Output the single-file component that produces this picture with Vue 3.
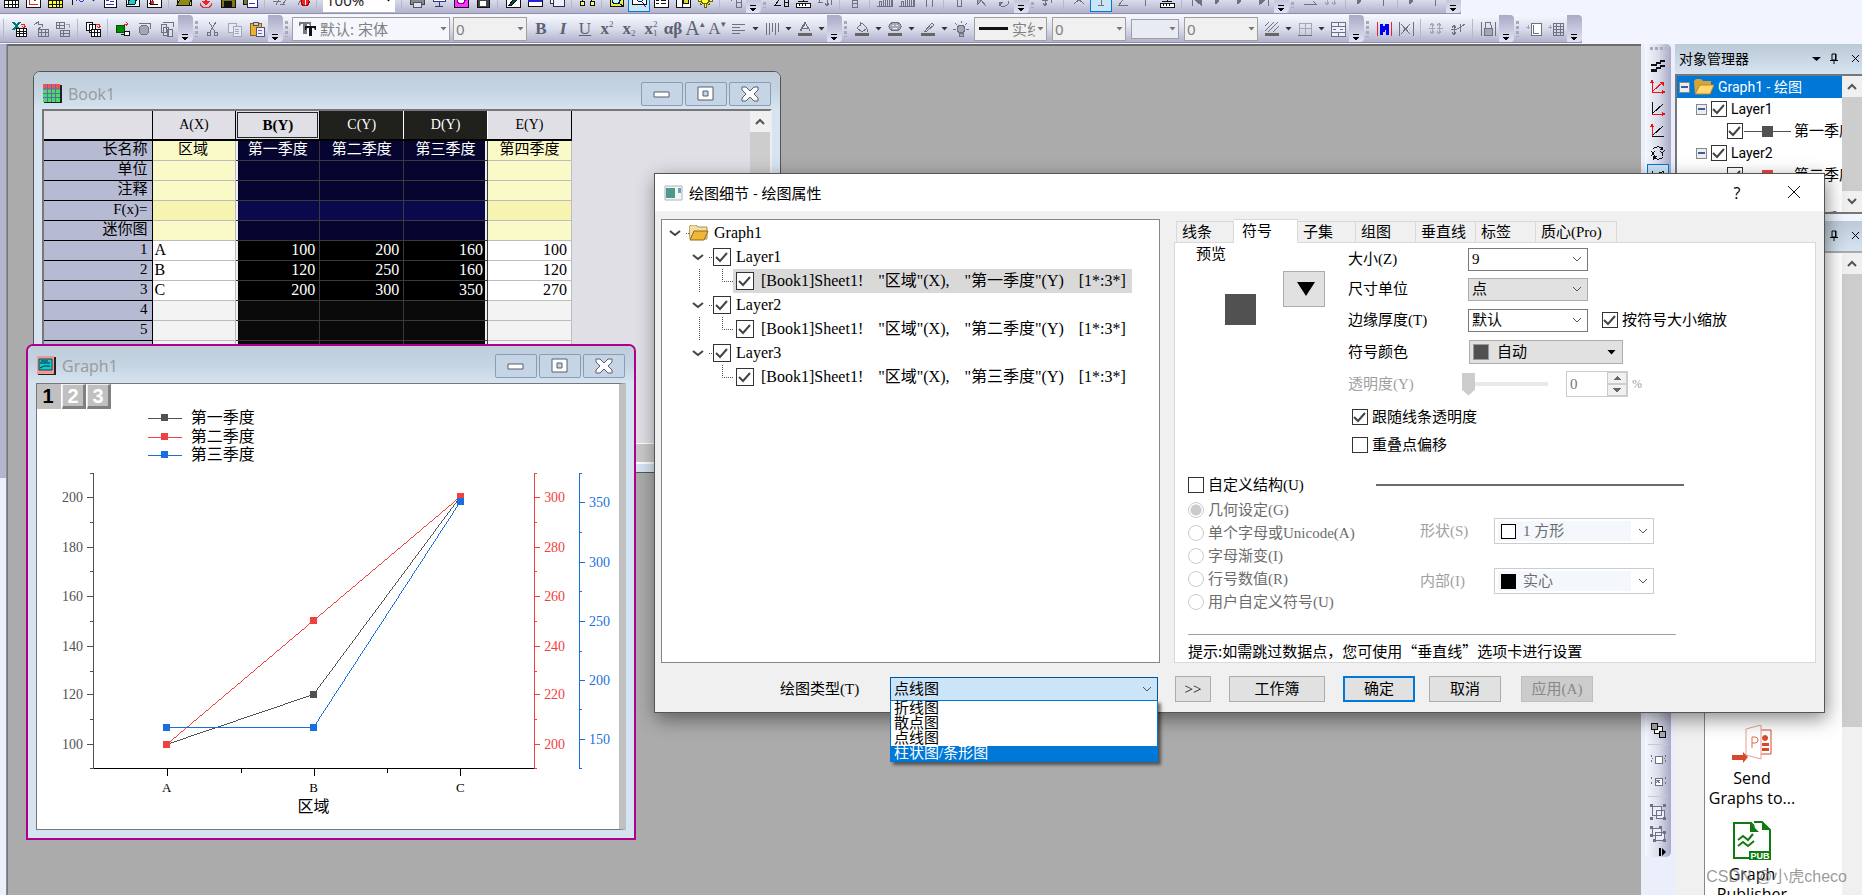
<script setup>
import { ref } from 'vue';

const K = '#111';
const G = '#6d7182';
const L = '#a3a6b4';
const N = 'none';

// each icon is a list of [path, fill, stroke] on a 16x16 grid
const icons = {
  sheet: [['M1 1h14v14H1z', '#fff', K], ['M1 5h14M1 8.500h14M1 12h14M5 1v14M9 1v14M12 1v14', N, K]],
  sheetY: [['M1 1h14v14H1z', '#ff3', K], ['M1 5h14M1 8h14M1 12h14M5 1v14M9 1v14M12 1v14', N, K]],
  graph: [['M1 1h14v14H1z', '#fff', K], ['M4 3v9h9M4 8l3-3 3 4 3-5', N, '#d22']],
  fx: [['M7 2c-4-1-2 6-4 11M2 7h5', N, K], ['M7 9c2-6 4 5 8-1', N, '#33c']],
  layout: [['M2 0h12v15H2z', '#fff', K], ['M4 4h3v5H4z', '#33c', N], ['M8 6h4M8 9h4M4 12h8', N, '#33c']],
  note: [['M2 2h13v12H2z', '#dff', K], ['M4 12l2-7h7l-2 7z', '#2cc', K]],
  matrix: [['M1 1h14v14H1z', '#fff', K], ['M3 12l9-9M4 4v8h8', N, K], ['M9 4h3v3H9zM5 9h3v3H5z', '#e22', N]],
  open: [['M1 4h6l2 2h6v7H1z', '#e7d34c', K], ['M1 13l3-6h11l-2 6z', '#8d8a18', K]],
  import: [['M2 11a6 5 0 0 0 12 0', N, '#d33'], ['M7 1h2v8h3l-4 5-4-5h3z', '#e22', N]],
  save: [['M1 1h14v14H1z', '#7a7a10', K], ['M4 9h8v6H4z', '#111', N], ['M4 1h8v5H4z', '#ddd', N]],
  saveAs: [['M1 1h11v11H1z', '#7a7a10', K], ['M5 5h10v10H5z', '#fff', '#228'], ['M7 11h6', N, '#33c']],
  run: [['M2 5l5 3-3 5M9 4l5 4-4 5M1 9h8M8 12h5', N, G]],
  stop: [['M2 5l5 3-3 5M8 4l3 3', N, G], ['M11 6a4 4 0 1 0 .1 0z', '#e22', '#b00'], ['M11 7v6', N, '#fff']],
  print: [['M3 2h10v5H3z', '#fff', '#555'], ['M1 6h14v6H1z', '#888', '#444'], ['M4 10h8v5H4z', '#ddf', '#555']],
  screen: [['M2 1h12v8H2z', '#fff', '#338'], ['M8 9v5M4 14h8', N, '#338'], ['M4 6l3-2 2 2 3-3', N, '#e22']],
  magenta: [['M1 1h14v14H1z', '#f3f', K], ['M8 4a4 4 0 1 0 .1 0z', '#fff', '#808']],
  film: [['M2 1h12v14H2z', '#444', K], ['M5 2h6v5H5zM5 9h6v5H5z', '#fff', N]],
  draw: [['M1 1h14v14H1z', '#fff', K], ['M4 13L12 3l1 4-6 6z', '#144', K]],
  win: [['M1 4h14v10H1z', '#fff', K], ['M1 4h14v6H1z', '#22d', N]],
  wins: [['M1 3h11v8H1z', '#fff', '#333'], ['M4 7h11v7H4z', '#eef', '#333']],
  org: [['M8 3L3 9M8 3l5 6', N, K], ['M1 9h4v4H1zM11 9h4v4h-4zM6 1h4v4H6z', '#ff5', K]],
  zoom: [['M1 1h13v13H1z', '#ee3', K], ['M7 4a4 4 0 1 0 .1 0zM10 11l5 4', '#bff', '#116']],
  zoom2: [['M1 1h14v11H1z', '#fff', K], ['M3 4h4v4H3z', '#111', N], ['M9 4a3 3 0 1 0 .1 0zM11 10l4 5', '#bff', '#116']],
  list: [['M1 1h14v14H1z', '#fff', K], ['M3 5h3M8 5h5M3 8h3M8 8h5M3 11h3M8 11h5', N, K]],
  script: [['M1 1h14v14H1z', '#fff', K], ['M7 1v14', N, K], ['M8 6h5v5H8z', '#dd2', K]],
  gear: [['M7 1h2v14H7zM1 7h14v2H1zM3 4l1-1 9 9-1 1zM12 3l1 1-9 9-1-1z', '#ff3', '#66600a'], ['M8 4a4 4 0 1 0 .1 0z', '#ff3', '#66600a']],
  addCol: [['M1 6h6M4 3v6', N, G], ['M9 2h5v13H9zM9 6h5M9 10h5', N, G]],
  sigma: [['M8 3H2l4 5-4 5h6', N, K], ['M11 3h4v11h-4zM11 7h4M11 10h4', N, K]],
  stamp: [['M8 2v7M3 9h10', N, K], ['M1 11h14v4H1z', '#fff', K], ['M4 12v2M7 12v2M10 12v2', N, K]],
  sort: [['M2 3h4l-4 7h4', N, G], ['M10 3v10M8 11l2 3 2-3M14 3v10', N, G]],
  cols: [['M5 1h5v14H5zM5 5h5M5 8h5M5 11h5', N, G]],
  bars: [['M2 9h2v5H2zM6 7h2v7H6zM10 4h2v10h-2zM14 2h1v12h-1z', N, G], ['M0 14.500h16', N, G]],
  tee: [['M2 6h12M5 6v9M11 6v9M5 2v4', N, G]],
  ibar: [['M6 1h4v13H6z', N, G]],
  arrowUp: [['M4 3l9 11M4 3v10l4-4z', L, G]],
  cycle: [['M2 7a6 5 0 0 1 10-3M14 9a6 5 0 0 1-10 4', N, G], ['M12 1v5H8zM4 15v-5h4z', G, N]],
  cross: [['M3 3l10 9M13 3L3 12', N, G]],
  tbar: [['M8 1v12M5 13h6M5 1h6', N, G]],
  zbar: [['M4 2h8l-8 11h9', N, G]],
  ybar: [['M8 6v8M5 3l3 3 3-3', N, G]],
  first: [['M3 3v11M6 8l6-5v10z', G, G]],
  down: [['M3 3h9l-7 9z', G, G]],
  last: [['M13 3v11M10 8L4 3v10z', G, G]],
  arrows: [['M1 6h12l-3-3M3 12h12l-3-3', N, G]],
  excel: [['M1 1h3l6 8H7zM7 1h3L4 9H1z', '#077', N], ['M5 7h10v8H5zM5 10h10M5 12.500h10M8 7v8M12 7v8', '#fff', K], ['M10 3h3v4M11 5l2 2 2-2', N, '#e22']],
  refresh: [['M1 4l4-3v2h4v3M8 6L5 8', N, G], ['M5 8h10v7H5zM5 11h10M8 8v7M12 8v7', N, G]],
  transfer: [['M1 1h8v6H1zM1 4h8M4 1v6', N, G], ['M5 9h9v6H5zM5 12h9M8 9v6', N, G], ['M11 3h3v4', N, L]],
  pages: [['M1 1h6v8H1zM4 3h6v8H4z', '#fff', K], ['M6 8h9v7H6zM6 11h9M9 8v7M12 8v7', '#fff', K], ['M11 3h3v4M12 5l2 2 2-2', N, '#e22']],
  plug: [['M1 4h8v7H1z', '#080', '#050'], ['M9 3h4M11 1l2 2-2 2', N, '#e22'], ['M6 13h3v-3h5v4H9', '#fff', K]],
  plug2: [['M7 4a5 5 0 1 0 .1 0z', L, G], ['M2 2h11v6', N, G]],
  plug3: [['M2 3h5v8H2zM4 6h5v8H4zM8 8h5v7H8z', '#dde', G], ['M4 1h10v5', N, G]],
  cut: [['M4 1l6 10M11 1L5 11', N, G], ['M4 11a2 2 0 1 0 .1 0zM11 11a2 2 0 1 0 .1 0z', N, G]],
  copy: [['M1 2h8v9H1z', '#e7e9f3', L], ['M6 5h8v10H6z', '#e7e9f3', L], ['M8 8h4M8 10h4M8 12h4', N, L]],
  paste: [['M1 2h11v12H1z', '#e8b13c', '#8a6414'], ['M4 1h5v3H4z', '#ccd', '#555'], ['M7 6h8v9H7z', '#eef', '#557'], ['M9 9h4M9 12h4', N, '#66a']],
  align: [['M1 3h13M1 6h8M1 9h13M1 12h8', N, G]],
  valign: [['M2 2v12M5 2v12M8 2v9M11 2v12M14 2v9', N, G]],
  textColor: [['M3 10L8 1l5 9M5 7h6M4 10L9 1', N, G], ['M1 12h14v3H1z', '#666', N]],
  bucket: [['M3 7l5-5 5 5-5 4z', '#dde', G], ['M13 8v3M6 1v4', N, G], ['M1 12h14v3H1z', '#666', N]],
  palette: [['M8 1a6 4.500 0 1 0 .1 0z', L, G], ['M5 4h2M9 4h2M6 7h4', N, '#eee'], ['M1 12h14v3H1z', '#666', N]],
  pen: [['M5 10l7-8 2 2-7 6z', '#dde', G], ['M1 12h14v3H1z', '#666', N]],
  bulb: [['M8 4a4 4 0 1 0 .1 0z', L, G], ['M6 12h4v3H6zM8 0v2M2 2l2 2M14 2l-2 2M0 8h3M13 8h3', L, G]],
  hatch: [['M1 5l4-4M1 10L10 1M4 11L14 1M9 11l6-6', N, G], ['M1 12h14v3H1z', '#666', N]],
  dotted: [['M2 2h12M2 7h12M2 2v12M8 2v12M14 2v12', N, L], ['M1 14h14', N, G]],
  tableA: [['M1 1h14v14H1zM1 5h14M1 11h14M8 1v4M8 11v4', '#eef', G], ['M3 8h3M10 8h3', N, G]],
  mask: [['M1 1v14M15 1v14', N, '#e22'], ['M4 13V3h2l2 4 2-4h2v10h-2V7l-2 4-2-4v6z', '#00e', '#00e']],
  unmask: [['M1 1v14M15 1v14M3 3l9 10M12 3L3 13', N, G]],
  updown: [['M4 2v11M2 5l2-3 2 3M2 10l2 3 2-3M1 7h6M11 2v11M9 5l2-3 2 3M9 10l2 3 2-3M9 7h6', N, L]],
  updown2: [['M4 4v10M2 7l2-3 2 3M2 11l2 3 2-3M10 3v8M1 9c5 0 7-1 14-6', N, G]],
  lock: [['M1 1v14M15 1v14M5 7V4a3 3 0 0 1 6 0v3', N, G], ['M4 7h8v7H4z', L, G]],
  addL: [['M0 6h4M2 4v4', N, L], ['M5 2h10v12H5z', '#fff', G], ['M7 4v8h6', N, G]],
  addGrid: [['M0 6h4M2 4v4', N, L], ['M5 2h10v12H5zM5 5h10M5 8h10M5 11h10M8 2v12M12 2v12', N, G]],
  ladder: [['M1 7h5V5h4V3h5v2h-4v2H7v2H1zM1 12h5v-2h4V8h5v2h-4v2H7v3H1z', K, N]],
  axis3: [['M2 1v12h12M2 13L13 3', N, '#e11'], ['M0 4l2-4 2 4zM12 11l4 2-4 2zM9 3h5v5z', '#e11', N]],
  axisX: [['M2 1v12M2 13L13 3', N, K], ['M2 13h12', N, '#e11'], ['M12 11l4 2-4 2z', '#e11', N]],
  axisY: [['M2 13h12M2 13L13 3', N, K], ['M2 1v12', N, '#e11'], ['M0 4l2-4 2 4z', '#e11', N]],
  swap: [['M3 4a6 5 0 0 1 10 0M13 12a6 5 0 0 1-10 0', N, K], ['M13 1v4H9zM3 15v-4h4z', K, N], ['M1 6l4 5M5 6l-4 5M10 6l2 2 3-3M12 8v3', N, K]],
  speed: [['M2 4v10M2 8h4M8 14l6-9M7 7l7-3', N, K], ['M9 6h4v3H9z', K, K]],
  merge: [['M4 4h8v7H4z', '#fff', K], ['M1 1h6v6H1zM9 9h6v6H9z', '#aaa', K]],
  front: [['M5 4h7v7H5z', '#fff', G], ['M1 3v2M1 8v2M15 3v2M15 8v2M2 6v1M14 6v1', N, G]],
  back: [['M5 4h7v7H5z', '#fff', G], ['M6 6l4 3M10 6L6 9M1 3v2M1 8v2M15 3v2M15 8v2', N, G]],
  group: [['M2 2h9v9H2zM6 6h8v8H6z', '#eceefa', G], ['M0 0h3v3H0zM13 0h3v3h-3zM0 13h3v3H0zM13 13h3v3h-3z', G, N]],
  ungroup: [['M2 2h9v7H2zM5 6h9v8H5z', '#eceefa', G], ['M0 0h3v3H0zM9 0h3v3H9zM0 8h3v3H0zM3 13h3v3H3zM13 13h3v3h-3zM13 5h3v3h-3z', G, N]]
};

const topBars = [
  { items: ['sheet', 'graph', 'sheetY', 'fx', '^', 'layout', 'note', 'matrix', '|', 'open', 'import', 'save', 'saveAs', '|', 'run', 'stop', '|', { combo: '100%', kind: 'zoom', dark: true }, '|', 'print', 'screen', 'magenta', 'film', '|', 'draw', 'win', 'wins', '|', 'org', '|', 'zoom', '*zoom2', 'list', 'script', 'gear', '|', 'addCol'] },
  { grip: true, items: ['sigma', 'stamp', 'sort', '|', 'cols', '|', 'bars', 'bars', 'tee', '|', 'ibar', 'arrowUp', 'cycle'] },
  { grip: true, items: ['updown2', '|', 'cross', '*tbar', 'zbar', 'ybar', 'stamp', '|', 'first', 'down', 'down', 'last'] },
  { grip: true, items: ['arrows', 'updown', '|', 'down', 'ybar', '|', 'down', 'ybar'] }
];

const formatBars = [
  { items: ['|', 'excel', 'refresh', 'transfer', '|', 'pages', '|', 'plug', 'plug2', 'plug3'] },
  { grip: true, items: ['cut', 'copy', 'paste'] },
  {
    grip: true,
    items: [
      { combo: '默认: 宋体', kind: 'font' }, { combo: '0', kind: 'size' },
      { text: 'B', cls: 'bold' }, { text: 'I', cls: 'ital' }, { text: 'U', cls: 'under' },
      { text: 'x', cls: 'bold', sup: '2' }, { text: 'x', cls: 'bold', sub: '2' }, { text: 'x', cls: 'bold', sup: '2', sub: '1' },
      { text: 'αβ', cls: 'bold plain' }, { text: 'A', cls: 'big', sup: '▴' }, { text: 'A', sup: '▾' },
      'align', '^', 'valign', '^', 'textColor', '^'
    ]
  },
  {
    grip: true,
    items: ['bucket', '^', 'palette', '^', 'pen', '^', 'bulb', { combo: '实线', kind: 'line' }, { combo: '0', kind: 'size' }, { combo: '', kind: 'swatch' }, { combo: '0', kind: 'size' }, 'hatch', '^', 'dotted', '^', 'tableA']
  },
  { grip: true, items: ['mask', 'unmask', '|', 'updown', 'updown2', '|', 'lock'] },
  { grip: true, items: ['addL', 'addGrid'] }
];

const bars = [
  { cls: 'bar-top', groups: topBars },
  { cls: 'bar-format', groups: formatBars }
];

const sideTop = ['ladder', 'axis3', 'axisX', 'axisY', 'swap', '*speed'];
const sideBottom = ['merge', '|', 'front', 'back', '|', 'group', 'ungroup'];

const isIcon = (it) => typeof it === 'string' && it !== '|' && it !== '^';
const iconOf = (it) => icons[it.replace('*', '')];

const columns = ['A(X)', 'B(Y)', 'C(Y)', 'D(Y)', 'E(Y)'];
const rows = [
  { head: '长名称', kind: 'meta name', cells: ['区域', '第一季度', '第二季度', '第三季度', '第四季度'] },
  { head: '单位', kind: 'meta', cells: ['', '', '', '', ''] },
  { head: '注释', kind: 'meta', cells: ['', '', '', '', ''] },
  { head: 'F(x)=', kind: 'meta formula', cells: ['', '', '', '', ''] },
  { head: '迷你图', kind: 'meta', cells: ['', '', '', '', ''] },
  { head: '1', kind: 'data', cells: ['A', '100', '200', '160', '100'] },
  { head: '2', kind: 'data', cells: ['B', '120', '250', '160', '120'] },
  { head: '3', kind: 'data', cells: ['C', '200', '300', '350', '270'] },
  { head: '4', kind: 'empty', cells: ['', '', '', '', ''] },
  { head: '5', kind: 'empty', cells: ['', '', '', '', ''] },
  { head: '6', kind: 'empty', cells: ['', '', '', '', ''] }
];

// chart
const catX = [130, 277, 424];
const yLeft = (v) => Math.round(361 - (v - 100) * 2.48);
const yRed = (v) => Math.round(361 - (v - 200) * 2.48);
const yBlue = (v) => Math.round(356 - (v - 150) * 1.19);

const series = [
  { name: '第一季度', color: '#515151', y: yLeft, values: [100, 120, 200], legendY: 34 },
  { name: '第二季度', color: '#f14040', y: yRed, values: [200, 250, 300], legendY: 53 },
  { name: '第三季度', color: '#1a6fdf', y: yBlue, values: [160, 160, 350], legendY: 71 }
].map((s) => ({ ...s, pts: s.values.map((v, i) => [catX[i], s.y(v)]) }));

const axes = [
  { x: 56, dir: -1, color: '#515151', y: yLeft, major: [100, 120, 140, 160, 180, 200], minor: [110, 130, 150, 170, 190] },
  { x: 498, dir: 1, color: '#f14040', y: yRed, major: [200, 220, 240, 260, 280, 300], minor: [210, 230, 250, 270, 290] },
  { x: 543, dir: 1, color: '#1a6fdf', y: yBlue, major: [150, 200, 250, 300, 350], minor: [175, 225, 275, 325] }
];

// dialog
const layers = ref([
  { name: 'Layer1', on: true, plot: '第一季度', plotOn: true, color: '#515151', current: true },
  { name: 'Layer2', on: true, plot: '第二季度', plotOn: true, color: '#f14040' },
  { name: 'Layer3', on: true, plot: '第三季度', plotOn: true, color: '#1a6fdf' }
]);
const plotParts = (name) => ['[Book1]Sheet1!', '"区域"(X),', `"${name}"(Y)`, '[1*:3*]'];

const tabs = [
  { label: '线条', cls: 'w58' },
  { label: '符号', cls: 'w64' },
  { label: '子集', cls: 'w58' },
  { label: '组图', cls: 'w60' },
  { label: '垂直线', cls: 'w60' },
  { label: '标签', cls: 'w60' },
  { label: '质心(Pro)', cls: 'w80' }
];
const activeTab = ref('符号');

const structures = ['几何设定(G)', '单个字母或Unicode(A)', '字母渐变(I)', '行号数值(R)', '用户自定义符号(U)'];
const plotTypes = ['折线图', '散点图', '点线图', '柱状图/条形图'];
const plotType = ref('点线图');
const hovered = ref('柱状图/条形图');
const scaleEdge = ref(true);
const followLine = ref(true);
const overlap = ref(false);
const custom = ref(false);
</script>

<template>
  <div class="app">
    <div v-for="bar in bars" :key="bar.cls" class="bar" :class="bar.cls">
      <div v-for="(group, gi) in bar.groups" :key="gi" class="bar-group">
        <span v-if="group.grip" class="grip"></span>
        <template v-for="(it, i) in group.items" :key="i">
          <span v-if="it === '|'" class="sep"></span>
          <span v-else-if="it === '^'" class="caret"></span>
          <button v-else-if="isIcon(it)" class="tool" :class="{ active: it[0] === '*' }" type="button" :aria-label="it">
            <svg viewBox="0 0 16 16" width="16" height="16">
              <path v-for="(p, pi) in iconOf(it)" :key="pi" :d="p[0]" :fill="p[1]" :stroke="p[2]" />
            </svg>
          </button>
          <button v-else-if="it.text" class="tool glyph" :class="it.cls" type="button">
            {{ it.text }}<span class="scripts"><i>{{ it.sup }}</i><i>{{ it.sub }}</i></span>
          </button>
          <span v-else class="bar-combo" :class="[it.kind, { dark: it.dark }]">
            <svg v-if="it.kind === 'font'" viewBox="0 0 18 18" width="18" height="18">
              <path d="M1 2h12v4h-1l-1-2H9v10H5V4H3L2 6H1z" fill="#777" />
              <path d="M7 6h11v4h-1l-1-2h-2v8h-3V8H9l-1 2H7z" fill="#111" />
            </svg>
            <span v-if="it.kind === 'line'" class="line-sample"></span>
            <select :aria-label="it.kind"><option>{{ it.combo }}</option></select>
            <span class="caret"></span>
          </span>
        </template>
        <span class="overflow"></span>
      </div>
    </div>

    <main class="main">
      <div class="edge"></div>
      <section class="desk">
        <section class="win book">
          <header class="win-title">
            <svg viewBox="0 0 20 20" width="20" height="20">
              <path d="M1 1h18v18H1z" fill="#222" />
              <path d="M0 0h17v18H0z" fill="#4d6" />
              <path d="M0 0h17v5H0z" fill="#e55" />
              <path d="M4.500 0v18M8.500 0v18M12.500 0v18M0 5h17M0 9.500h17M0 13.500h17" stroke="#66a" fill="none" />
            </svg>
            <h2>Book1</h2>
            <div class="win-buttons">
              <button type="button" aria-label="Minimize"><svg viewBox="0 0 20 20" width="20" height="20"><path d="M2 8h15v5H2z" fill="#fff" stroke="#555e70" /></svg></button>
              <button type="button" aria-label="Maximize"><svg viewBox="0 0 20 20" width="20" height="20"><path d="M2 3h15v13H2zM7 7h5v5H7z" fill="#fff" stroke="#555e70" fill-rule="evenodd" /></svg></button>
              <button type="button" aria-label="Close"><svg viewBox="0 0 20 20" width="20" height="20"><path d="M2 3h4l4 4 4-4h4v3l-4 4 4 4v3h-4l-4-4-4 4H2v-3l4-4-4-4z" fill="#fff" stroke="#555e70" /></svg></button>
            </div>
          </header>
          <div class="book-body">
            <div class="sheet-area">
              <table class="sheet">
                <colgroup><col class="c-head" /><col v-for="c in columns" :key="c" class="c-data" /></colgroup>
                <thead>
                  <tr>
                    <th></th>
                    <th v-for="(c, i) in columns" :key="c" :class="{ first: i === 1, sel: i === 2 || i === 3 }"><span>{{ c }}</span></th>
                  </tr>
                </thead>
                <tbody>
                  <tr v-for="row in rows" :key="row.head" :class="row.kind">
                    <th>{{ row.head }}</th>
                    <td v-for="(v, i) in row.cells" :key="i" :class="{ text: i === 0, sel: i > 0 && i < 4, 'sel-start': i === 1, 'sel-end': i === 3 }">{{ v }}</td>
                  </tr>
                </tbody>
              </table>
            </div>
            <div class="scroll book-scroll"><span class="arrow up"></span><span class="thumb"></span></div>
          </div>
          <div class="book-foot"></div>
        </section>

        <section class="win graph">
          <header class="win-title">
            <svg viewBox="0 0 20 20" width="20" height="20">
              <path d="M1 1h18v18H1z" fill="#222" />
              <path d="M0 0h17v18H0z" fill="#e99" />
              <path d="M2 3h13v11H2z" fill="#1cc" stroke="#144" />
              <path d="M3 7h10M4 5h7M3 12l4-2h6" stroke="#124" fill="none" />
            </svg>
            <h2>Graph1</h2>
            <div class="win-buttons">
              <button type="button" aria-label="Minimize"><svg viewBox="0 0 20 20" width="20" height="20"><path d="M2 8h15v5H2z" fill="#fff" stroke="#555e70" /></svg></button>
              <button type="button" aria-label="Maximize"><svg viewBox="0 0 20 20" width="20" height="20"><path d="M2 3h15v13H2zM7 7h5v5H7z" fill="#fff" stroke="#555e70" fill-rule="evenodd" /></svg></button>
              <button type="button" aria-label="Close"><svg viewBox="0 0 20 20" width="20" height="20"><path d="M2 3h4l4 4 4-4h4v3l-4 4 4 4v3h-4l-4-4-4 4H2v-3l4-4-4-4z" fill="#fff" stroke="#555e70" /></svg></button>
            </div>
          </header>
          <div class="graph-body">
            <div class="layer-tabs">
              <button v-for="n in 3" :key="n" type="button" :class="{ on: n === 1 }">{{ n }}</button>
            </div>
            <svg class="chart" viewBox="0 0 583 446">
              <g v-for="s in series" :key="s.name" :fill="s.color" :stroke="s.color">
                <path :d="`M111 ${s.legendY}.5h34`" />
                <rect :x="125" :y="s.legendY - 3" width="6" height="6" />
                <text class="legend" x="154" :y="s.legendY + 5">{{ s.name }}</text>
              </g>
              <path d="M56 385.500H498M130.500 385v8M277.500 385v8M424.500 385v8M204.500 385v5M351.500 385v5" stroke="#000" />
              <g v-for="a in axes" :key="a.x" :stroke="a.color" :fill="a.color">
                <path :d="`M${a.x + 0.5} 89V386M${a.x} 89.5h${3 * a.dir}M${a.x} 385.5h${3 * a.dir}`" />
                <path v-for="v in a.major" :key="v" :d="`M${a.x} ${a.y(v) + 0.5}h${6 * a.dir}`" />
                <path v-for="v in a.minor" :key="v" :d="`M${a.x} ${a.y(v) + 0.5}h${3 * a.dir}`" />
                <text v-for="v in a.major" :key="v" class="tick" :x="a.x + 10 * a.dir" :y="a.y(v) + 5" :text-anchor="a.dir < 0 ? 'end' : 'start'">{{ v }}</text>
              </g>
              <text v-for="(c, i) in ['A', 'B', 'C']" :key="c" class="tick cat" :x="catX[i]" y="409" text-anchor="middle">{{ c }}</text>
              <text class="axis-title" x="277" y="429" text-anchor="middle">区域</text>
              <g v-for="s in series" :key="s.color" :stroke="s.color">
                <polyline :points="s.pts.join(' ')" fill="none" />
                <rect v-for="(p, i) in s.pts" :key="i" :x="p[0] - 3" :y="p[1] - 3" width="6" height="6" :fill="s.color" />
              </g>
            </svg>
          </div>
        </section>
      </section>

      <aside class="side-bar">
        <div class="side-tools">
          <span class="grip flat"></span>
          <button v-for="it in sideTop" :key="it" class="tool" :class="{ active: it[0] === '*' }" type="button" :aria-label="it">
            <svg viewBox="0 0 16 16" width="16" height="16">
              <path v-for="(p, pi) in iconOf(it)" :key="pi" :d="p[0]" :fill="p[1]" :stroke="p[2]" />
            </svg>
          </button>
          <div class="side-gap"></div>
          <template v-for="(it, i) in sideBottom" :key="i">
            <span v-if="it === '|'" class="hsep"></span>
            <button v-else class="tool" type="button" :aria-label="it">
              <svg viewBox="0 0 16 16" width="16" height="16">
                <path v-for="(p, pi) in iconOf(it)" :key="pi" :d="p[0]" :fill="p[1]" :stroke="p[2]" />
              </svg>
            </button>
          </template>
          <span class="side-more"><svg viewBox="0 0 8 8" width="8" height="8"><path d="M0 0h2v8H0zM3 0l4 4-4 4z" fill="#000" /></svg></span>
        </div>
      </aside>

      <aside class="panels">
        <section class="panel objects">
          <header class="panel-title">
            <h2>对象管理器</h2>
            <svg viewBox="0 0 50 12" width="50" height="12">
              <path d="M0 4h9l-4.500 4z" fill="#000" />
              <path d="M20 1h4v6h-4zM23.500 1v6M18 7.500h8M22 7v4M40 2l7 7M47 2l-7 7" stroke="#000" fill="none" />
            </svg>
          </header>
          <div class="panel-body">
            <ul class="obj-tree">
              <li class="obj root">
                <span class="box"></span>
                <svg viewBox="0 0 20 16" width="20" height="16"><path d="M0 2l2-2h5l2 2h8v13H1z" fill="#d9a436" /><path d="M1 15l5-9h14l-4 9z" fill="#ffd873" stroke="#b98722" /></svg>
                <span>Graph1 - 绘图</span>
              </li>
              <template v-for="l in layers" :key="l.name">
                <li class="obj layer"><span class="box"></span><label><input v-model="l.on" type="checkbox" /> {{ l.name }}</label></li>
                <li class="obj plot">
                  <label><input v-model="l.plotOn" type="checkbox" />
                    <svg viewBox="0 0 47 12" width="47" height="12"><path d="M0 6.500h47" stroke="#515151" /><path d="M18 1h11v11H18z" :fill="l.color" /></svg>
                    {{ l.plot }}</label>
                </li>
              </template>
            </ul>
            <div class="scroll"><span class="arrow up"></span><span class="thumb"></span><span class="arrow"></span></div>
          </div>
        </section>
        <section class="panel apps">
          <header class="panel-title">
            <h2></h2>
            <svg viewBox="0 0 50 12" width="50" height="12">
              <path d="M0 4h9l-4.500 4z" fill="#000" />
              <path d="M20 1h4v6h-4zM23.500 1v6M18 7.500h8M22 7v4M40 2l7 7M47 2l-7 7" stroke="#000" fill="none" />
            </svg>
          </header>
          <div class="panel-body">
            <div class="app-gutter"></div>
            <div class="app-list">
              <figure>
                <svg viewBox="0 0 40 40" width="40" height="40">
                  <path d="M29 5h10v24H29" fill="#fff" stroke="#d8492a" />
                  <path d="M14 4l15-4v34l-15-4z" fill="#fff" stroke="#e9a090" />
                  <path d="M33 10a3 3 0 1 0 .1 0zM30 18h7v3h-7zM30 23h7v3h-7z" fill="#d8492a" />
                  <path d="M20 23V12h3a3 3 0 0 1 0 6h-3" stroke="#e06a50" fill="none" />
                  <path d="M0 30h11v-3l5 5-5 6v-3H0z" fill="#d8492a" />
                </svg>
                <figcaption>Send<br />Graphs to...</figcaption>
              </figure>
              <figure>
                <svg viewBox="0 0 40 40" width="40" height="40">
                  <path d="M2 2h17l8 8v27H2z" fill="#fff" stroke="#107c10" stroke-width="2" />
                  <path d="M22 1h8l8 8v28H27" fill="#fff" stroke="#107c10" stroke-width="2" />
                  <path d="M18 2l9 9h-9zM30 1l9 8h-9z" fill="#107c10" />
                  <path d="M6 19l5-4 5 4 5-6M6 25l5-4 5 4 6-5" stroke="#107c10" stroke-width="2" fill="none" />
                  <path d="M17 30h22v9H17z" fill="#107c10" />
                  <text x="28" y="38" text-anchor="middle" class="pub">PUB</text>
                </svg>
                <figcaption>Graph<br />Publisher</figcaption>
              </figure>
            </div>
            <div class="scroll"><span class="arrow up"></span><span class="thumb long"></span></div>
          </div>
        </section>
      </aside>
    </main>

    <section class="dialog" role="dialog" aria-labelledby="dlg-title">
      <header class="dlg-title">
        <svg viewBox="0 0 19 16" width="19" height="16"><path d="M1 1h17v14H1z" fill="#f5f7f7" stroke="#a9b4b8" /><path d="M2 3h9v10H2z" fill="#4d9a8d" /><path d="M14 3h3v5h-3z" fill="#6ba3b5" /></svg>
        <h1 id="dlg-title">绘图细节 - 绘图属性</h1>
        <button type="button" aria-label="Help">?</button>
        <button type="button" aria-label="Close"><svg viewBox="0 0 14 14" width="14" height="14"><path d="M1 1l12 12M13 1L1 13" stroke="#111" fill="none" /></svg></button>
      </header>

      <div class="dlg-body">
        <div class="tree">
          <div class="node">
            <svg viewBox="0 0 27 24" width="27" height="24"><path d="M8 10l5 4 5-4" stroke="#444" stroke-width="2" fill="none" /><path d="M24 12.500h3" stroke="#555" stroke-dasharray="1 1" /></svg>
            <svg viewBox="0 0 20 16" width="20" height="16"><path d="M0 2l2-2h5l2 2h9v12H1z" fill="#f5dfa0" stroke="#a98f55" /><path d="M1 15l4-9h14l-4 9z" fill="#f2b634" stroke="#8a6a20" /></svg>
            <span class="node-name">Graph1</span>
          </div>
          <template v-for="(l, li) in layers" :key="l.name">
            <div class="node">
              <svg viewBox="0 0 51 24" width="51" height="24"><path d="M31 10l5 4 5-4" stroke="#444" stroke-width="2" fill="none" /><path d="M47 12.500h4" stroke="#555" stroke-dasharray="1 1" /></svg>
              <label><input v-model="l.on" type="checkbox" /><span class="node-name">{{ l.name }}</span></label>
            </div>
            <div class="node">
              <svg viewBox="0 0 71 24" width="71" height="24"><path v-if="li < 2" d="M37.500 0v24" stroke="#555" stroke-dasharray="1 1" /><path d="M60.500 0v12.500h11" fill="none" stroke="#555" stroke-dasharray="1 1" /></svg>
              <label class="plot-label" :class="{ current: l.current }">
                <input v-model="l.plotOn" type="checkbox" />
                <span v-for="part in plotParts(l.plot)" :key="part">{{ part }}</span>
              </label>
            </div>
          </template>
        </div>

        <div class="tab-box">
          <div class="tabs" role="tablist">
            <button v-for="t in tabs" :key="t.label" type="button" role="tab" :class="[t.cls, { on: activeTab === t.label }]" @click="activeTab = t.label">{{ t.label }}</button>
          </div>
          <div class="tab-panel">
            <div class="symbol-top">
              <div class="preview">
                <span class="preview-label">预览</span>
                <div class="preview-row"><span class="preview-mark"></span><button type="button" aria-label="Symbol gallery"><svg viewBox="0 0 18 14" width="18" height="14"><path d="M0 0h18L9 14z" /></svg></button></div>
              </div>
              <div class="fields">
                <label for="size">大小(Z)</label>
                <div><select id="size" class="combo"><option>9</option></select></div>
                <label for="unit">尺寸单位</label>
                <div><select id="unit" class="combo gray"><option>点</option></select></div>
                <label for="edge">边缘厚度(T)</label>
                <div><select id="edge" class="combo"><option>默认</option></select>
                  <label class="check"><input v-model="scaleEdge" type="checkbox" />按符号大小缩放</label></div>
                <label for="color">符号颜色</label>
                <div><button id="color" type="button" class="color-btn"><span class="chip"></span>自动<span class="caret"></span></button></div>
                <label for="alpha" class="dim">透明度(Y)</label>
                <div class="dim"><input id="alpha" type="range" value="0" disabled /><span class="spin"><input type="text" value="0" aria-label="透明度" disabled /><span class="spin-btns"><i></i><i></i></span></span><span class="pct">%</span></div>
                <label class="check wide"><input v-model="followLine" type="checkbox" />跟随线条透明度</label>
                <label class="check wide"><input v-model="overlap" type="checkbox" />重叠点偏移</label>
              </div>
            </div>

            <div class="custom-head"><label class="check"><input v-model="custom" type="checkbox" />自定义结构(U)</label><span class="rule"></span></div>
            <div class="custom">
              <div class="radios">
                <label v-for="(s, i) in structures" :key="s"><input type="radio" name="structure" :checked="i === 0" disabled />{{ s }}</label>
              </div>
              <div class="shapes">
                <div><label for="shape">形状(S)</label><span class="shape-combo"><i></i><select id="shape" class="combo" disabled><option>1 方形</option></select></span></div>
                <div><label for="inner">内部(I)</label><span class="shape-combo"><i class="solid"></i><select id="inner" class="combo" disabled><option>实心</option></select></span></div>
              </div>
            </div>
            <hr />
            <p class="hint">提示:如需跳过数据点，您可使用“垂直线”选项卡进行设置</p>
          </div>
        </div>
      </div>

      <footer class="dlg-foot">
        <label for="plot-type">绘图类型(T)</label>
        <div class="type-box">
          <select id="plot-type" v-model="plotType" class="combo">
            <option v-for="t in plotTypes" :key="t">{{ t }}</option>
          </select>
          <ul class="type-list" role="listbox">
            <li v-for="t in plotTypes" :key="t" role="option" :class="{ hover: hovered === t }" @mouseenter="hovered = t" @click="plotType = t">{{ t }}</li>
          </ul>
        </div>
        <button type="button" class="more">&gt;&gt;</button>
        <button type="button" class="book-btn">工作簿</button>
        <button type="button" class="ok">确定</button>
        <button type="button" class="cancel">取消</button>
        <button type="button" class="apply" disabled>应用(A)</button>
      </footer>
    </section>

    <span class="watermark">CSDN @小虎checo</span>
  </div>
</template>

<style>
body {
  margin: 0;
  overflow: hidden;
}
</style>

<style scoped>
* {
  box-sizing: border-box;
}

.app {
  position: relative;
  display: flex;
  flex-direction: column;
  height: 100vh;
  overflow: hidden;
  background: #f2f5ff;
  color: #000;
  font-family: "Liberation Serif", "Noto Sans CJK SC", serif;
  font-size: 15px;
}

h1,
h2,
p,
ul,
figure {
  margin: 0;
  padding: 0;
  font-weight: 400;
  list-style: none;
}

button,
input,
select {
  margin: 0;
  padding: 0;
  font: inherit;
  color: inherit;
}

/* Toolbars */
.bar {
  display: flex;
  flex-shrink: 0;
  overflow: hidden;
}

.bar-top {
  height: 14px;
  align-items: flex-end;
}

.bar-format {
  height: 30px;
  padding-top: 1px;
}

.bar-group {
  display: flex;
  align-items: center;
  flex-shrink: 0;
  height: 28px;
  background: linear-gradient(#f6f8ff, #dadeec 50%, #b2b2cc);
  border-bottom: 1px solid #9090ac;
}

.grip {
  width: 3px;
  height: 16px;
  margin: 0 4px 0 2px;
  background: repeating-linear-gradient(#a8a8b8 0 3px, transparent 3px 5px);
}

.grip.flat {
  width: 16px;
  height: 3px;
  margin: 3px 0 4px;
  background: repeating-linear-gradient(90deg, #a8a8b8 0 3px, transparent 3px 5px);
}

.sep {
  width: 1px;
  height: 20px;
  margin: 0 4px 0 3px;
  background: #b4b8c8;
}

.tool {
  display: flex;
  align-items: center;
  justify-content: center;
  width: 22px;
  height: 24px;
  border: 1px solid transparent;
  background: none;
}

.tool svg {
  shape-rendering: crispEdges;
}

.tool.active {
  border-color: #0078d7;
  background: #cce4f7;
}

.glyph {
  font-size: 17px;
  color: #5d6172;
}

.bold {
  font-weight: 700;
}

.ital {
  font-style: italic;
  font-weight: 700;
}

.under {
  text-decoration: underline;
}

.big {
  font-size: 20px;
}

.scripts {
  display: flex;
  flex-direction: column;
}

.scripts i {
  height: 9px;
  font: 9px/9px "Liberation Serif", serif;
}

.plain .scripts,
.ital .scripts,
.under .scripts {
  display: none;
}

.caret {
  flex-shrink: 0;
  width: 7px;
  height: 4px;
  margin: 0 2px;
  background: #333;
  clip-path: polygon(0 0, 100% 0, 50% 100%);
}

.overflow {
  align-self: stretch;
  width: 15px;
  border-radius: 0 4px 4px 0;
  background:
    linear-gradient(#000, #000) 4px 19px / 6px 1px no-repeat,
    conic-gradient(from -45deg at 50% 100%, #000 90deg, transparent 0) 4px 22px / 6px 3px no-repeat,
    linear-gradient(#a8abc4, #e2e2f6);
}

.bar-combo {
  display: flex;
  align-items: center;
  height: 24px;
  margin: 0 3px 0 2px;
  padding-left: 2px;
  border: 1px solid #a0a0a0;
  background: #f0f0f0;
  color: #808080;
}

.bar-combo select {
  flex: 1;
  min-width: 0;
  border: 0;
  background: none;
  appearance: none;
  font: 15px/20px "Noto Sans", "Noto Sans CJK SC", sans-serif;
}

.bar-combo .caret {
  background: #777;
}

.bar-combo.dark {
  border-color: #fff;
  background: #fff;
  color: #222;
}

.bar-combo.dark .caret {
  background: #000;
}

.bar-combo.zoom {
  width: 72px;
}

.bar-combo.font {
  width: 158px;
  gap: 4px;
  margin: 0 1px 0 0;
  padding-left: 5px;
  background: #f5f7fd;
}

.bar-combo.size {
  width: 74px;
}

.bar-combo.line {
  width: 73px;
}

.bar-combo.swatch {
  width: 48px;
  height: 20px;
  background: #e8eaf4;
}

.line-sample {
  width: 29px;
  height: 3px;
  margin: 0 4px 0 2px;
  background: #111;
}

/* Main area */
.main {
  display: flex;
  flex: 1;
  min-height: 0;
}

.edge {
  width: 7px;
  background: linear-gradient(#b4b6d0 434px, #ebeefb 434px);
  border-right: 1px solid #8c8c9c;
}

.desk {
  position: relative;
  flex: 1;
  overflow: hidden;
  border-top: 2px solid #6a6a6a;
  border-left: 1px solid #777;
  background: #ababab;
}

.win {
  position: absolute;
  padding: 0 8px 8px;
  border: 1px solid #555;
  border-radius: 7px 7px 0 0;
  background: #d6e4f1;
}

.book {
  left: 25px;
  top: 25px;
  width: 748px;
}

.graph {
  left: 18px;
  top: 298px;
  width: 610px;
  border: 2px solid #b0008a;
}

.win-title {
  display: flex;
  align-items: center;
  gap: 5px;
  height: 37px;
  margin: 0 -8px;
  padding: 3px 9px 0;
  border-radius: 6px 6px 0 0;
  background: linear-gradient(#bfcddb, #c5d4e2 50%, #d6e4f1);
}

.book .win-title {
  padding-top: 6px;
}

.win-title h2 {
  flex: 1;
  font: 16px/22px "Open Sans", "Noto Sans", sans-serif;
  color: #999;
}

.win-buttons {
  display: flex;
  gap: 2px;
}

.win-buttons button {
  display: flex;
  align-items: center;
  justify-content: center;
  width: 42px;
  height: 24px;
  border: 1px solid #8a9cb8;
  border-radius: 2px;
  background: #c6d5e5;
}

.book-body {
  display: flex;
  height: 334px;
  border: 2px solid #777;
  border-right-color: #eee;
  border-bottom: 0;
  background: #e0dfe5;
}

.sheet-area {
  flex: 1;
}

.book-foot {
  height: 21px;
  border: solid #fff;
  border-width: 1px 0 2px;
  background: #c8c8c8;
}

.sheet {
  width: 528px;
  table-layout: fixed;
  border-collapse: collapse;
  font-size: 16px;
  line-height: 18px;
}

.c-head {
  width: 108px;
}

.sheet tr {
  height: 20px;
}

.sheet thead tr {
  height: 29px;
}

.sheet thead th {
  height: 29px;
  padding: 0;
  border-right: 1px solid #000;
  border-bottom: 2px solid #000;
  background: #e0dfe5;
  font-size: 14px;
  font-weight: 400;
}

.sheet thead .first {
  padding: 1px;
  font-size: 15px;
  font-weight: 700;
}

.sheet thead .first span {
  display: block;
  border: 1px solid #222;
  line-height: 24px;
}

.sheet thead .sel {
  border-right-color: #fff;
  background: #20201c;
  color: #fff;
}

.sheet tbody th {
  padding: 0 4px 1px 0;
  border-right: 1px solid #000;
  border-bottom: 1px solid #000;
  background: #b6bad2;
  font-size: 15px;
  font-weight: 400;
  line-height: 17px;
  text-align: right;
}

.data th,
.empty th {
  font-size: 16px;
}

.sheet td {
  padding: 0 4px 1px;
  border: 1px solid #bdbdbd;
  text-align: right;
  line-height: 17px;
  background: #fff;
}

.sheet td.text {
  padding-left: 2px;
  text-align: left;
  border-left-color: #000;
}

.sheet .meta td {
  background: #faf9c8;
  font-size: 15px;
  text-align: center;
}

.sheet .formula td {
  background: #f6f4b0;
}

.sheet .empty td {
  background: #f3f3f3;
}

.sheet td.sel {
  border-color: #3a3a3a;
  background: #000;
  color: #fff;
}

.sheet .meta td.sel {
  background: #05052f;
}

.sheet .formula td.sel {
  background: #09094c;
}

.sheet .empty td.sel {
  background: #0a0a0a;
}

.sheet td.sel-start {
  box-shadow: inset 2px 0 #eee;
}

.sheet td.sel-end {
  box-shadow: inset -2px 0 #eee;
}

.scroll {
  display: flex;
  flex-direction: column;
  width: 20px;
  background: #f0f0f0;
}

.arrow {
  flex-shrink: 0;
  height: 21px;
  background: url("data:image/svg+xml,%3Csvg xmlns='http://www.w3.org/2000/svg' width='10' height='7'%3E%3Cpath d='M1 1l4 4 4-4' fill='none' stroke='%23555' stroke-width='2'/%3E%3C/svg%3E") center no-repeat;
}

.arrow.up {
  background-image: url("data:image/svg+xml,%3Csvg xmlns='http://www.w3.org/2000/svg' width='10' height='7'%3E%3Cpath d='M1 6l4-4 4 4' fill='none' stroke='%23555' stroke-width='2'/%3E%3C/svg%3E");
}

.thumb {
  flex: 1;
  background: #cdcdcd;
}

.thumb.long {
  flex: 0 0 453px;
}

.graph-body {
  position: relative;
  border: 1px solid #777;
  border-right: 7px solid #c0c0c0;
  background: #fff;
}

.layer-tabs {
  position: absolute;
  top: 0;
  left: 0;
  display: flex;
  gap: 1px;
}

.layer-tabs button {
  width: 24px;
  height: 25px;
  border: solid;
  border-width: 1px 3px 3px 1px;
  border-color: #eee #808080 #808080 #eee;
  background: #c0c0c0;
  color: #fff;
  font: 700 20px/20px "Liberation Sans", sans-serif;
}

.layer-tabs .on {
  border-color: #c0c0c0;
  color: #000;
}

.chart {
  display: block;
  width: 100%;
  shape-rendering: crispEdges;
}

.chart text {
  stroke: none;
}

.legend {
  fill: #000;
  font-size: 16px;
}

.tick {
  font-size: 14px;
}

.cat {
  font-size: 13px;
}

.axis-title {
  font-size: 16px;
}

/* Right tool strip */
.side-bar {
  width: 34px;
  padding-left: 4px;
  background: #ebeefb;
}

.side-tools {
  display: flex;
  flex-direction: column;
  align-items: center;
  width: 26px;
  border-radius: 0 5px 5px 0;
  background: linear-gradient(90deg, #f6f8ff, #dadeec 50%, #a9a9c6);
}

.side-tools .tool {
  height: 22px;
}

.side-gap {
  height: 533px;
}

.hsep {
  width: 20px;
  height: 1px;
  margin: 3px 0 4px;
  background: #c8c8c8;
}

.side-more {
  align-self: stretch;
  padding: 0 4px;
  text-align: right;
  line-height: 12px;
}

/* Right panels */
.panels {
  display: flex;
  flex-direction: column;
  gap: 7px;
  width: 187px;
  font: 15px/22px "Open Sans", "Noto Sans CJK SC", sans-serif;
}

.panel-title {
  display: flex;
  align-items: center;
  height: 30px;
  padding: 0 0 0 4px;
  background: linear-gradient(#bccad8, #d6e4f1);
}

.panel-title h2 {
  flex: 1;
  font-size: 14px;
}

.panel-body {
  display: flex;
  border-top: 2px solid #777;
  border-left: 2px solid #777;
  background: #fff;
}

.objects .panel-body {
  height: 140px;
  border-bottom: 2px solid #777;
}

.apps {
  display: flex;
  flex: 1;
  flex-direction: column;
  min-height: 0;
}

.apps .panel-body {
  flex: 1;
  min-height: 0;
  border-left: 0;
  border-top-color: #aaa;
}

.obj-tree {
  flex: 1;
  overflow: hidden;
  font-family: "Roboto", "Noto Sans CJK SC", sans-serif;
  font-size: 14px;
}

.obj {
  display: flex;
  align-items: center;
  gap: 4px;
  height: 22px;
  white-space: nowrap;
}

.obj label {
  display: flex;
  align-items: center;
  gap: 4px;
}

.root {
  padding-left: 2px;
  background: #0078d7;
  color: #fff;
}

.layer {
  padding-left: 19px;
}

.plot {
  padding-left: 50px;
  font-size: 15px;
}

.plot label {
  gap: 1px;
}

.plot svg {
  margin-right: 2px;
}

.box {
  width: 11px;
  height: 11px;
  border: 1px solid #888;
  background: linear-gradient(#3b5ba5, #3b5ba5) center / 7px 2px no-repeat #eee;
}

.app-gutter {
  width: 30px;
  border-right: 1px solid #888;
  background: #f0f0f0;
}

.app-list {
  display: flex;
  flex: 1;
  flex-direction: column;
  gap: 13px;
  min-width: 0;
  padding: 472px 43px 0 0;
  overflow: hidden;
  text-align: center;
}

.app-list figcaption {
  font: 16px/20px "Open Sans", sans-serif;
  white-space: nowrap;
}

.app-list svg {
  display: block;
  margin: 0 auto 3px;
}

.pub {
  fill: #fff;
  font: 700 9px "Liberation Sans", sans-serif;
}

/* Dialog */
.dialog {
  position: absolute;
  top: 173px;
  left: 654px;
  right: 37px;
  border: 1px solid #555;
  background: #f0f0f0;
  box-shadow: 2px 6px 18px rgba(0, 0, 0, 0.45);
  line-height: 20px;
}

.dlg-title {
  display: flex;
  align-items: center;
  gap: 6px;
  height: 37px;
  padding: 0 13px 0 9px;
  background: #fff;
}

.dlg-title h1 {
  flex: 1;
  font: 15px/20px "Open Sans", "Noto Sans CJK SC", sans-serif;
}

.dlg-title button {
  width: 34px;
  margin-left: 17px;
  border: 0;
  background: none;
  font: 16px/20px "Open Sans", sans-serif;
}

.dlg-body {
  display: flex;
  gap: 14px;
  padding: 8px 8px 0 6px;
}

.tree {
  flex: 0 0 499px;
  padding-top: 1px;
  border: 1px solid #828790;
  background: #fff;
  font-size: 16px;
}

.node,
.node label {
  display: flex;
  align-items: center;
  height: 24px;
}

.node-name {
  margin-left: 5px;
}

.node label {
  white-space: nowrap;
}

.plot-label {
  gap: 15px;
  padding: 0 6px 0 3px;
}

.plot-label input {
  margin-right: -8px;
}

.plot-label.current {
  background: #d9d9d9;
}

input[type="checkbox"] {
  width: 16px;
  height: 16px;
  flex-shrink: 0;
  border: 1px solid #333;
  background: #fff;
  appearance: none;
}

.tree input[type="checkbox"] {
  width: 18px;
  height: 18px;
}

input[type="checkbox"]:checked {
  background: url("data:image/svg+xml,%3Csvg xmlns='http://www.w3.org/2000/svg' width='14' height='12'%3E%3Cpath d='M1 6l4 4 7-8' fill='none' stroke='%23444' stroke-width='2'/%3E%3C/svg%3E") center no-repeat #fff;
}

.tab-box {
  display: flex;
  flex: 1;
  flex-direction: column;
}

.tabs {
  display: flex;
  align-items: flex-end;
  height: 24px;
  padding-left: 2px;
  margin-bottom: -1px;
}

.tabs button {
  height: 22px;
  padding-left: 5px;
  border: 1px solid #d9d9d9;
  border-left-width: 0;
  background: #f0f0f0;
  text-align: left;
  white-space: nowrap;
}

.tabs button:first-child {
  border-left-width: 1px;
}

.tabs .on {
  z-index: 1;
  height: 24px;
  padding-left: 8px;
  border-bottom-color: #fff;
  background: #fff;
}

.w58 {
  width: 58px;
}

.w60 {
  width: 60px;
}

.w64 {
  width: 64px;
}

.w80 {
  width: 81px;
}

.tab-panel {
  flex: 1;
  padding: 1px 12px 0 13px;
  border: 1px solid #d9d9d9;
  background: #fff;
}

.symbol-top {
  display: grid;
  grid-template-columns: 160px 1fr;
}

.preview-label {
  display: block;
  padding-left: 8px;
}

.preview-row {
  display: flex;
  gap: 27px;
  padding: 7px 0 0 37px;
}

.preview-mark {
  width: 31px;
  height: 31px;
  margin-top: 23px;
  background: #515151;
}

.preview-row button {
  width: 42px;
  height: 36px;
  padding: 4px 0 0 4px;
  border: 1px solid #adadad;
  background: #e1e1e1;
}

.fields {
  display: grid;
  grid-template-columns: 120px 1fr;
  grid-template-rows: 30px 30px 32px 32px 32px 34px 22px;
  align-items: center;
}

.fields > div {
  display: flex;
  align-items: center;
}

.check {
  display: flex;
  align-items: center;
  gap: 4px;
  white-space: nowrap;
}

.fields div .check {
  margin-left: 14px;
}

.wide {
  grid-column: 1 / -1;
  padding-left: 4px;
}

.combo {
  width: 120px;
  height: 23px;
  padding: 0 3px;
  border: 1px solid #7a7a7a;
  border-radius: 0;
  appearance: none;
  background: url("data:image/svg+xml,%3Csvg xmlns='http://www.w3.org/2000/svg' width='10' height='7'%3E%3Cpath d='M1 1l4 4 4-4' fill='none' stroke='%23555'/%3E%3C/svg%3E") right 5px center no-repeat #fff;
}

.combo.gray {
  border-color: #adadad;
  background-color: #e1e1e1;
}

.color-btn {
  display: flex;
  align-items: center;
  width: 154px;
  height: 24px;
  margin-left: 1px;
  padding: 0 4px 0 3px;
  border: 1px solid #adadad;
  background: #e1e1e1;
}

.color-btn .caret {
  width: 9px;
  height: 5px;
  margin-left: auto;
  background: #000;
}

.chip {
  width: 16px;
  height: 16px;
  margin-right: 8px;
  border: 1px solid #999;
  background: #515151;
}

.dim {
  color: #a0a0a0;
}

input[type="range"] {
  width: 86px;
  height: 24px;
  margin-left: -6px;
  background: linear-gradient(#e7eaea, #e7eaea) center / 100% 4px no-repeat;
  appearance: none;
}

input[type="range"]::-webkit-slider-thumb {
  width: 13px;
  height: 23px;
  background: #ccc;
  clip-path: polygon(0 0, 100% 0, 100% 75%, 50% 100%, 0 75%);
  appearance: none;
}

.spin {
  display: flex;
  width: 62px;
  height: 26px;
  margin: 0 4px 0 18px;
  border: 1px solid #ccc;
}

.spin input {
  width: 40px;
  padding-left: 3px;
  border: 0;
  background: #fff;
  color: #777;
}

.spin-btns {
  display: flex;
  flex: 1;
  flex-direction: column;
}

.spin-btns i {
  flex: 1;
  border: 1px solid #ccc;
  background: conic-gradient(from 135deg at 50% 0, #666 90deg, transparent 0) center / 8px 4px no-repeat #f0f0f0;
}

.spin-btns i:last-child {
  background: conic-gradient(from -45deg at 50% 100%, #666 90deg, transparent 0) center / 8px 4px no-repeat #f0f0f0;
}

.pct {
  font-size: 12px;
}

.custom-head {
  display: flex;
  align-items: center;
  height: 22px;
  margin-top: 18px;
}

.custom-head .check {
  width: 188px;
}

.rule {
  width: 308px;
  height: 2px;
  background: #6a6a6a;
}

.custom {
  display: flex;
  margin-top: 2px;
  color: #6d6d6d;
}

.radios {
  width: 232px;
}

.radios label {
  display: flex;
  align-items: center;
  gap: 4px;
  height: 23px;
}

input[type="radio"] {
  width: 16px;
  height: 16px;
  border: 1px solid #ccc;
  border-radius: 50%;
  background: #fff;
  appearance: none;
}

input[type="radio"]:checked {
  background: radial-gradient(#ccc 5px, #fff 6px);
}

.shapes {
  display: flex;
  flex-direction: column;
  gap: 24px;
  padding-top: 20px;
}

.shapes > div {
  display: flex;
  align-items: center;
}

.shapes label {
  width: 74px;
  color: #a0a0a0;
}

.shape-combo {
  display: flex;
  align-items: center;
  width: 160px;
  height: 26px;
  padding: 0 0 0 6px;
  border: 1px solid #ccc;
  background: linear-gradient(#f4f8fd, #f4f8fd) 3px center / 133px 20px no-repeat #fff;
}

.shape-combo i {
  width: 15px;
  height: 15px;
  border: 1px solid #000;
  background: #fff;
}

.shape-combo .solid {
  background: #000;
}

.shape-combo .combo {
  flex: 1;
  height: 20px;
  padding-left: 7px;
  border: 0;
  background-color: transparent;
  color: #6d6d6d;
  opacity: 1;
}

hr {
  width: 488px;
  height: 1px;
  margin: 21px 0 0;
  border: 0;
  background: #a0a0a0;
}

.hint {
  padding: 6px 0 1px;
  font-family: "Noto Sans CJK SC", sans-serif;
}

.dlg-foot {
  display: flex;
  align-items: center;
  padding: 13px 8px 10px 125px;
}

.dlg-foot > label {
  width: 110px;
}

.type-box {
  position: relative;
  width: 268px;
  margin-right: 17px;
}

.type-box .combo {
  display: block;
  width: 100%;
  height: 24px;
  border-color: #005499;
  background-color: #cce4f7;
}

.type-list {
  position: absolute;
  top: 23px;
  left: 0;
  right: 0;
  border: 1px solid #0078d7;
  background: #fff;
  box-shadow: 3px 3px 3px rgba(0, 0, 0, 0.5);
}

.type-list li {
  padding-left: 3px;
  line-height: 15px;
}

.type-list .hover {
  background: #0078d7;
  color: #fff;
}

.dlg-foot button {
  width: 72px;
  height: 26px;
  border: 1px solid #adadad;
  background: #e1e1e1;
}

.dlg-foot .more {
  width: 36px;
}

.dlg-foot .book-btn {
  width: 96px;
  margin: 0 18px;
}

.dlg-foot .ok {
  margin-right: 14px;
  border: 2px solid #0078d7;
}

.dlg-foot .apply {
  margin-left: 20px;
  border-color: #bfbfbf;
  background: #ccc;
  color: #888;
}

.watermark {
  position: absolute;
  right: 15px;
  bottom: 6px;
  font: 16px/24px "Liberation Sans", "Noto Sans CJK SC", sans-serif;
  color: rgba(120, 120, 120, 0.75);
}
</style>
